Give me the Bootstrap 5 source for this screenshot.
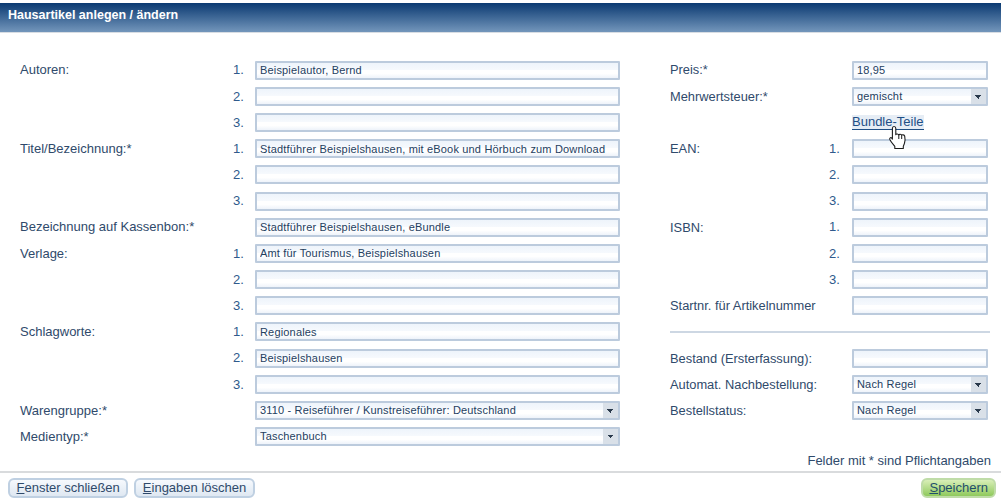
<!DOCTYPE html>
<html lang="de"><head><meta charset="utf-8"><title>Hausartikel</title>
<link href="https://cdn.jsdelivr.net/npm/bootstrap@5.3.0/dist/css/bootstrap.min.css" rel="stylesheet">
<style>
html,body{height:501px;overflow:hidden}
body{font-family:"Liberation Sans",Arial,sans-serif;font-size:13px;color:#2f4a6b;background:#fff}
.hd-bar{margin-top:3px;height:30px;background:linear-gradient(#0b3a72,#7396bb);color:#fff;font-weight:700;font-size:12.5px;line-height:24px;padding-left:8px;border-bottom:1px solid #d8dde3}
.form-area{padding:24px 0 0 20px}
.left-col{width:600px}
.right-col{width:320px;margin-left:50px;font-size:12.85px}
.right-col .num{font-size:13px}
.f-row{height:26.2px;display:flex;align-items:center}
.lbl-l{width:213px}.lbl-r{width:159px;white-space:nowrap}
.num{width:22px;color:#2f5a8c}
.lbl-r+.num,.lbl-r+.lbl-gap{width:23px}
.lbl-gap{width:22px}
.txt-in,.sel-in{height:19px;border:2px solid #bccbdd;border-radius:1px;padding:0 3px;font-size:11px;line-height:15px;letter-spacing:.17px;color:#24405f;background:linear-gradient(#eef4fb 0,#f6f9fd 45%,#fff 50%,#fff 70%,#eef3fa 100%);box-shadow:none}
.txt-in:focus,.sel-in:focus{border-color:#bccbdd;box-shadow:none;color:#24405f}
.w-l{width:365px}.w-r{width:136px}
.sel-in{appearance:none;padding-right:20px;background-image:linear-gradient(135deg,#2a3a4c 50%,transparent 50%),linear-gradient(225deg,#2a3a4c 50%,transparent 50%),linear-gradient(#d9e0e8,#d9e0e8),linear-gradient(#eef4fb 0,#f6f9fd 45%,#fff 50%,#fff 70%,#eef3fa 100%);background-size:4px 4px,4px 4px,15px 15px,100% 100%;background-position:right 4px top 6px,right 7px top 6px,right 0 top 0,0 0;background-repeat:no-repeat}
.bundle{position:relative;color:#1f4f85;background:#e6edf5;font-size:13px;line-height:14px;border-bottom:1px solid #1f4f85;text-decoration:none}
.hand{position:absolute;left:36px;top:10px;width:21px;height:25px;z-index:2}
.divider{border-top:2px solid #cdd7e3;width:320px}
.req{text-align:right;padding-right:10px;height:21px;line-height:22px}
.ft{border-top:2px solid #d9dbdd;padding:5px 5px 0 8px;gap:6px}
.act,.act-save{height:20px;padding:0 6.5px;font-size:13px;line-height:16px;color:#2f4a6b;border:2px solid #bfd0e2;border-radius:6px;background:linear-gradient(#f6f9fd,#dfe8f2)}
.act:hover{color:#2f4a6b;border-color:#bfd0e2}
.act-save{padding:0 6px;color:#1f4f6b;border-color:#bfdca8;background:linear-gradient(#d9efb8,#8fc95c)}
</style></head><body>
<div class="hd-bar">Hausartikel anlegen / ändern</div>
<div class="form-area d-flex">
<div class="left-col">
<div class="f-row"><span class="lbl-l">Autoren:</span><span class="num">1.</span><input class="form-control txt-in w-l" value="Beispielautor, Bernd"></div>
<div class="f-row"><span class="lbl-l"></span><span class="num">2.</span><input class="form-control txt-in w-l"></div>
<div class="f-row"><span class="lbl-l"></span><span class="num">3.</span><input class="form-control txt-in w-l"></div>
<div class="f-row"><span class="lbl-l">Titel/Bezeichnung:*</span><span class="num">1.</span><input class="form-control txt-in w-l" value="Stadtführer Beispielshausen, mit eBook und Hörbuch zum Download"></div>
<div class="f-row"><span class="lbl-l"></span><span class="num">2.</span><input class="form-control txt-in w-l"></div>
<div class="f-row"><span class="lbl-l"></span><span class="num">3.</span><input class="form-control txt-in w-l"></div>
<div class="f-row"><span class="lbl-l">Bezeichnung auf Kassenbon:*</span><span class="lbl-gap"></span><input class="form-control txt-in w-l" value="Stadtführer Beispielshausen, eBundle"></div>
<div class="f-row"><span class="lbl-l">Verlage:</span><span class="num">1.</span><input class="form-control txt-in w-l" value="Amt für Tourismus, Beispielshausen"></div>
<div class="f-row"><span class="lbl-l"></span><span class="num">2.</span><input class="form-control txt-in w-l"></div>
<div class="f-row"><span class="lbl-l"></span><span class="num">3.</span><input class="form-control txt-in w-l"></div>
<div class="f-row"><span class="lbl-l">Schlagworte:</span><span class="num">1.</span><input class="form-control txt-in w-l" value="Regionales"></div>
<div class="f-row"><span class="lbl-l"></span><span class="num">2.</span><input class="form-control txt-in w-l" value="Beispielshausen"></div>
<div class="f-row"><span class="lbl-l"></span><span class="num">3.</span><input class="form-control txt-in w-l"></div>
<div class="f-row"><span class="lbl-l">Warengruppe:*</span><span class="lbl-gap"></span><select class="form-select sel-in w-l"><option>3110 - Reiseführer / Kunstreiseführer: Deutschland</option></select></div>
<div class="f-row"><span class="lbl-l">Medientyp:*</span><span class="lbl-gap"></span><select class="form-select sel-in w-l"><option>Taschenbuch</option></select></div>
</div>
<div class="right-col">
<div class="f-row"><span class="lbl-r">Preis:*</span><span class="lbl-gap"></span><input class="form-control txt-in w-r" value="18,95"></div>
<div class="f-row"><span class="lbl-r">Mehrwertsteuer:*</span><span class="lbl-gap"></span><select class="form-select sel-in w-r"><option>gemischt</option></select></div>
<div class="f-row"><span class="lbl-r"></span><span class="lbl-gap"></span><a class="bundle" href="#">Bundle-Teile<svg class="hand" viewBox="0 0 21 25"><path d="M6 1.5c1.2 0 1.8.8 1.8 2v6.2c.2-1 2.7-1 3 .3.3-1 2.6-1 2.9.4.4-.9 2.6-.8 3 .8.5 2.3.4 5-.2 7l-1.2 3.2v2.1H6.8v-2.1c-1.600-2-3.800-4.500-5-7-.5-1.200.8-2.300 2-1.300l.6 1V3.500c0-1.200.500-2 1.600-2z" fill="#fff" stroke="#1b1b1b" stroke-width="1.100" stroke-linejoin="round"/><path d="M10.800 10v4M13.700 10.500v3.500" stroke="#1b1b1b" fill="none"/></svg></a></div>
<div class="f-row"><span class="lbl-r">EAN:</span><span class="num">1.</span><input class="form-control txt-in w-r"></div>
<div class="f-row"><span class="lbl-r"></span><span class="num">2.</span><input class="form-control txt-in w-r"></div>
<div class="f-row"><span class="lbl-r"></span><span class="num">3.</span><input class="form-control txt-in w-r"></div>
<div class="f-row"><span class="lbl-r">ISBN:</span><span class="num">1.</span><input class="form-control txt-in w-r"></div>
<div class="f-row"><span class="lbl-r"></span><span class="num">2.</span><input class="form-control txt-in w-r"></div>
<div class="f-row"><span class="lbl-r"></span><span class="num">3.</span><input class="form-control txt-in w-r"></div>
<div class="f-row"><span class="lbl-r">Startnr. für Artikelnummer</span><span class="lbl-gap"></span><input class="form-control txt-in w-r"></div>
<div class="f-row"><div class="divider"></div></div>
<div class="f-row"><span class="lbl-r">Bestand (Ersterfassung):</span><span class="lbl-gap"></span><input class="form-control txt-in w-r"></div>
<div class="f-row"><span class="lbl-r">Automat. Nachbestellung:</span><span class="lbl-gap"></span><select class="form-select sel-in w-r"><option>Nach Regel</option></select></div>
<div class="f-row"><span class="lbl-r">Bestellstatus:</span><span class="lbl-gap"></span><select class="form-select sel-in w-r"><option>Nach Regel</option></select></div>
</div>
</div>
<div class="req">Felder mit * sind Pflichtangaben</div>
<div class="ft d-flex">
<button class="btn act" type="button"><u>F</u>enster schließen</button>
<button class="btn act" type="button"><u>E</u>ingaben löschen</button>
<button class="btn act-save ms-auto" type="button"><u>S</u>peichern</button>
</div>
</body></html>
